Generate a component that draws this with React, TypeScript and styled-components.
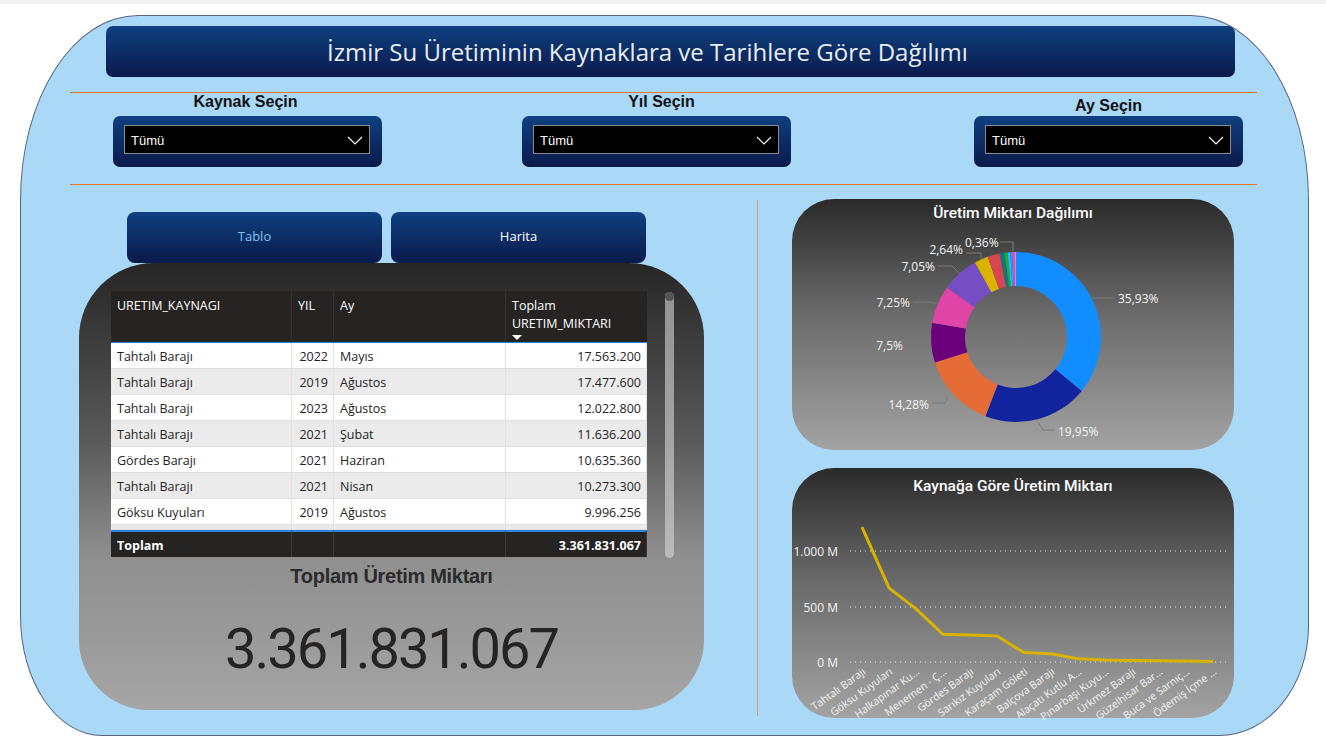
import React from "react";
import styled, { createGlobalStyle } from "styled-components";

const GlobalStyle = createGlobalStyle`
  html, body { margin: 0; padding: 0; background: #ffffff; }
  body { font-family: "Open Sans", "Liberation Sans", sans-serif; overflow: hidden; }
`;

const Page = styled.div`
  width: 1326px;
  height: 736px;
  box-sizing: border-box;
  overflow: hidden;
  background: #ffffff;
  border-top: 4px solid #f2f2f2;
  padding: 11px 0 0 20px;
`;

const Panel = styled.main`
  box-sizing: border-box;
  width: 1289px;
  height: 721px;
  background: #aad8f7;
  border: 1px solid #56667f;
  border-radius: 118px 118px 90px 82px / 185px 185px 110px 120px;
  display: flex;
  flex-direction: column;
`;

const TitleBar = styled.header`
  box-sizing: border-box;
  margin: 10px 0 0 85px;
  width: 1129px;
  height: 51px;
  padding-right: 46px;
  border-radius: 7px;
  background: linear-gradient(#0e4080, #0b1a4a);
  display: flex;
  align-items: center;
  justify-content: center;
  color: #e9eef5;
  font-family: "Open Sans", "Noto Sans", sans-serif;
  font-size: 24px;
`;

const Rule = styled.div<{ $mt: number }>`
  margin: ${(p) => p.$mt}px 0 0 49px;
  width: 1187px;
  height: 1px;
  background: #f07522;
`;

const FilterRow = styled.section`
  display: flex;
  height: 91px;
`;

const Slicer = styled.div<{ $ml: number }>`
  margin-left: ${(p) => p.$ml}px;
  width: 269px;
  display: flex;
  flex-direction: column;
`;

const SlicerLabel = styled.div<{ $pt: number; $dx: number }>`
  box-sizing: border-box;
  height: 23px;
  padding-top: ${(p) => p.$pt}px;
  line-height: 17px;
  text-align: center;
  transform: translateX(${(p) => p.$dx}px);
  font-family: "Liberation Sans", Arial, sans-serif;
  font-weight: bold;
  font-size: 16px;
  color: #111;
`;

const SlicerBox = styled.div`
  box-sizing: border-box;
  height: 51px;
  border-radius: 7px;
  background: linear-gradient(#0e4080, #0b1a4a);
  padding: 9px 12px 0 11px;
`;

const SelectField = styled.div`
  box-sizing: border-box;
  height: 29px;
  background: #000;
  border: 1px solid #8a8a8a;
  display: flex;
  align-items: center;
  justify-content: space-between;
  padding: 2px 6px 0 6px;
  color: #fff;
  font-family: "Liberation Sans", Arial, sans-serif;
  font-size: 13px;
`;

const ContentRow = styled.section`
  display: flex;
  align-items: flex-start;
`;

const LeftCol = styled.div`
  margin: 27px 0 0 58px;
  width: 625px;
  display: flex;
  flex-direction: column;
`;

const ButtonRow = styled.div`
  display: flex;
  gap: 9px;
  padding-left: 48px;
`;

const NavButton = styled.div<{ $active?: boolean }>`
  width: 255px;
  height: 51px;
  border-radius: 8px;
  background: linear-gradient(#0e4080, #0b1a4a);
  display: flex;
  align-items: center;
  justify-content: center;
  padding-bottom: 3px;
  box-sizing: border-box;
  font-family: "Open Sans", sans-serif;
  font-size: 13px;
  color: ${(p) => (p.$active ? "#7ec3f5" : "#ffffff")};
`;

const TableCard = styled.div`
  box-sizing: border-box;
  width: 625px;
  height: 447px;
  border-radius: 75px 75px 70px 70px;
  background: linear-gradient(#262626 0%, #5a5a5a 40%, #8e8e8e 65%, #a5a5a5 100%);
  padding: 28px 0 0 32px;
  display: flex;
  flex-direction: column;
`;

const TableRow = styled.div`
  display: flex;
  align-items: flex-start;
`;

const Table = styled.div`
  width: 536px;
  display: grid;
  grid-template-columns: 181px 42px 172px 141px;
  font-family: "Open Sans", sans-serif;
  font-size: 12.5px;
`;

const HeadCell = styled.div<{ $right?: boolean }>`
  box-sizing: border-box;
  height: 52px;
  background: #252423;
  color: #fff;
  padding: 6px 6px 0 6px;
  line-height: 18px;
  border-right: ${(p) => (p.$right ? "none" : "1px solid #33322f")};
  border-bottom: 1px solid #2f86d8;
`;

const SortArrow = styled.div`
  width: 0;
  height: 0;
  margin-top: 2px;
  border-left: 5px solid transparent;
  border-right: 5px solid transparent;
  border-top: 5px solid #fff;
`;

const Cell = styled.div<{ $shade: boolean; $align: string; $h: number }>`
  box-sizing: border-box;
  height: ${(p) => p.$h}px;
  background: ${(p) => (p.$shade ? "#ebebeb" : "#ffffff")};
  color: #252423;
  text-align: ${(p) => p.$align};
  padding: 1px 5px 0 6px;
  line-height: 25px;
  border-right: 1px solid #e2e2e2;
  border-bottom: 1px solid #dedede;
  overflow: hidden;
  white-space: nowrap;
`;

const TotalCell = styled.div<{ $align: string }>`
  box-sizing: border-box;
  height: 27px;
  background: #252423;
  color: #fff;
  font-weight: bold;
  text-align: ${(p) => p.$align};
  padding: 1px 5px 0 6px;
  line-height: 25px;
  border-top: 2px solid #2f86d8;
  border-right: 1px solid #3a3936;
`;

const ScrollTrack = styled.div`
  margin: 1px 0 0 18px;
  width: 9px;
  height: 266px;
  border-radius: 5px;
  background: rgba(215, 215, 215, 0.6);
  display: flex;
  flex-direction: column;
`;

const ScrollThumb = styled.div`
  width: 9px;
  height: 9px;
  border-radius: 50%;
  background: #555;
`;

const KpiTitle = styled.div`
  margin: 6px 0 0 -32px;
  line-height: 24px;
  text-align: center;
  font-family: "Liberation Sans", Arial, sans-serif;
  font-weight: bold;
  font-size: 20px;
  letter-spacing: -0.3px;
  color: #2b2b2b;
`;

const KpiValue = styled.div`
  margin: 31px 0 0 -32px;
  line-height: 60px;
  text-align: center;
  font-family: Roboto, "Open Sans", sans-serif;
  font-size: 56px;
  letter-spacing: -2px;
  color: #252423;
`;

const Divider = styled.div`
  margin: 15px 0 0 53px;
  width: 1px;
  height: 516px;
  background: #e3957a;
`;

const RightCol = styled.div`
  margin: 14px 0 0 34px;
  width: 442px;
  display: flex;
  flex-direction: column;
  gap: 18px;
`;

const ChartCard = styled.div<{ $h: number }>`
  width: 442px;
  height: ${(p) => p.$h}px;
  border-radius: 42px;
  background: linear-gradient(#2a2a2a, #6a6a6a 45%, #a3a3a3);
  display: flex;
  flex-direction: column;
`;

const ChartTitle = styled.div<{ $pt: number }>`
  padding-top: ${(p) => p.$pt}px;
  line-height: 18px;
  text-align: center;
  font-family: Roboto, "Open Sans", sans-serif;
  font-weight: 500;
  font-size: 15.5px;
  color: #ffffff;
`;

const Chevron = () => (
  <svg width="16" height="9" viewBox="0 0 16 9">
    <polyline points="1,1 8,8 15,1" fill="none" stroke="#fff" strokeWidth="1.2" />
  </svg>
);

const rows = [
  ["Tahtalı Barajı", "2022", "Mayıs", "17.563.200"],
  ["Tahtalı Barajı", "2019", "Ağustos", "17.477.600"],
  ["Tahtalı Barajı", "2023", "Ağustos", "12.022.800"],
  ["Tahtalı Barajı", "2021", "Şubat", "11.636.200"],
  ["Gördes Barajı", "2021", "Haziran", "10.635.360"],
  ["Tahtalı Barajı", "2021", "Nisan", "10.273.300"],
  ["Göksu Kuyuları", "2019", "Ağustos", "9.996.256"],
];
const aligns = ["left", "right", "left", "right"];

const segments: [number, string][] = [
  [35.93, "#118DFF"],
  [19.95, "#12239E"],
  [14.28, "#E66C37"],
  [7.5, "#6B007B"],
  [7.25, "#E044A7"],
  [7.05, "#744EC2"],
  [2.64, "#D9B300"],
  [2.3, "#D64550"],
  [0.9, "#197278"],
  [0.6, "#1AAB40"],
  [0.5, "#15C6F4"],
  [0.36, "#4092FF"],
  [0.4, "#BE5DC9"],
  [0.34, "#F472D0"],
];

const arcPath = (cx: number, cy: number, r0: number, r1: number, a0: number, a1: number) => {
  const p = (r: number, a: number) => [cx + r * Math.sin(a), cy - r * Math.cos(a)];
  const large = a1 - a0 > Math.PI ? 1 : 0;
  const [x0, y0] = p(r1, a0);
  const [x1, y1] = p(r1, a1);
  const [x2, y2] = p(r0, a1);
  const [x3, y3] = p(r0, a0);
  return `M${x0} ${y0} A${r1} ${r1} 0 ${large} 1 ${x1} ${y1} L${x2} ${y2} A${r0} ${r0} 0 ${large} 0 ${x3} ${y3} Z`;
};

const donutLabels: { t: string; x: number; y: number; anchor: "start" | "end"; line: string }[] = [
  { t: "35,93%", x: 326, y: 76, anchor: "start", line: "300,76 322,76" },
  { t: "19,95%", x: 266, y: 209, anchor: "start", line: "246,200 251,208 263,208" },
  { t: "14,28%", x: 137, y: 182, anchor: "end", line: "156,175 153,181 140,181" },
  { t: "7,5%", x: 111, y: 123, anchor: "end", line: "139,121 115,121" },
  { t: "7,25%", x: 118, y: 80, anchor: "end", line: "145,82 139,80 121,80" },
  { t: "7,05%", x: 143, y: 44, anchor: "end", line: "168,52 160,44 146,44" },
  { t: "2,64%", x: 171, y: 27, anchor: "end", line: "189,37 189,31 174,31" },
  { t: "0,36%", x: 173, y: 20, anchor: "start", line: "208,20 221,20 221,29" },
];

const Donut = () => {
  let acc = 0;
  const total = segments.reduce((s, [v]) => s + v, 0);
  return (
    <svg width="442" height="228" viewBox="0 0 442 228">
      {segments.map(([v, c], i) => {
        const a0 = (acc / total) * Math.PI * 2;
        acc += v;
        const a1 = (acc / total) * Math.PI * 2;
        return <path key={i} d={arcPath(224, 115, 51, 85, a0, a1)} fill={c} />;
      })}
      {donutLabels.map((l, i) => (
        <g key={i}>
          <polyline points={l.line} fill="none" stroke="#7a7a7a" strokeWidth="1" />
          <text
            x={l.x}
            y={l.y}
            textAnchor={l.anchor}
            dominantBaseline="central"
            fill="#f4f4f4"
            fontSize="12"
            fontFamily="'Open Sans', sans-serif"
          >
            {l.t}
          </text>
        </g>
      ))}
    </svg>
  );
};

const sources = [
  "Tahtalı Barajı",
  "Göksu Kuyuları",
  "Halkapınar Ku...",
  "Menemen - Ç...",
  "Gördes Barajı",
  "Sarıkız Kuyuları",
  "Karaçam Göleti",
  "Balçova Barajı",
  "Alaçatı Kutlu A...",
  "Pınarbaşı Kuyu...",
  "Ürkmez Barajı",
  "Güzelhisar Bar...",
  "Buca ve Sarnıç...",
  "Ödemiş İçme ...",
];
const values = [1220, 670, 480, 250, 245, 235, 85, 75, 30, 18, 14, 12, 8, 4];

const LineChart = () => {
  const xs = values.map((_, i) => 70 + 27 * i);
  const ys = values.map((v) => 167 - v * 0.1106);
  const pts = xs.map((x, i) => `${x},${ys[i]}`).join(" ");
  const grid = [
    { y: 56, t: "1.000 M" },
    { y: 112, t: "500 M" },
    { y: 167, t: "0 M" },
  ];
  return (
    <svg width="442" height="222" viewBox="0 0 442 222" overflow="visible">
      {grid.map((g) => (
        <g key={g.t}>
          <line x1="58" x2="434" y1={g.y} y2={g.y} stroke="#e6e6e6" strokeWidth="1" strokeDasharray="1 4" />
          <text
            x="46"
            y={g.y}
            textAnchor="end"
            dominantBaseline="central"
            fill="#f4f4f4"
            fontSize="12"
            fontFamily="'Open Sans', sans-serif"
          >
            {g.t}
          </text>
        </g>
      ))}
      <polyline points={pts} fill="none" stroke="#D9B300" strokeWidth="3" strokeLinejoin="round" />
      {sources.map((s, i) => (
        <text
          key={s}
          transform={`translate(${xs[i] + 2} 175) rotate(-36)`}
          textAnchor="end"
          dominantBaseline="central"
          fill="#f2f2f2"
          fontSize="10.5"
          fontFamily="'Open Sans', sans-serif"
        >
          {s}
        </text>
      ))}
    </svg>
  );
};

export default function App() {
  return (
    <>
      <GlobalStyle />
      <Page>
        <Panel>
          <TitleBar>İzmir Su Üretiminin Kaynaklara ve Tarihlere Göre Dağılımı</TitleBar>
          <Rule $mt={15} />
          <FilterRow>
            <Slicer $ml={92}>
              <SlicerLabel $pt={0} $dx={-2}>Kaynak Seçin</SlicerLabel>
              <SlicerBox>
                <SelectField>
                  <span>Tümü</span>
                  <Chevron />
                </SelectField>
              </SlicerBox>
            </Slicer>
            <Slicer $ml={140}>
              <SlicerLabel $pt={0} $dx={5}>Yıl Seçin</SlicerLabel>
              <SlicerBox>
                <SelectField>
                  <span>Tümü</span>
                  <Chevron />
                </SelectField>
              </SlicerBox>
            </Slicer>
            <Slicer $ml={183}>
              <SlicerLabel $pt={4} $dx={0}>Ay Seçin</SlicerLabel>
              <SlicerBox>
                <SelectField>
                  <span>Tümü</span>
                  <Chevron />
                </SelectField>
              </SlicerBox>
            </Slicer>
          </FilterRow>
          <Rule $mt={0} />
          <ContentRow>
            <LeftCol>
              <ButtonRow>
                <NavButton $active>Tablo</NavButton>
                <NavButton>Harita</NavButton>
              </ButtonRow>
              <TableCard>
                <TableRow>
                  <Table>
                    <HeadCell>URETIM_KAYNAGI</HeadCell>
                    <HeadCell>YIL</HeadCell>
                    <HeadCell>Ay</HeadCell>
                    <HeadCell $right>
                      Toplam
                      <br />
                      URETIM_MIKTARI
                      <SortArrow />
                    </HeadCell>
                    {rows.map((r, ri) =>
                      r.map((c, ci) => (
                        <Cell key={`${ri}-${ci}`} $shade={ri % 2 === 1} $align={aligns[ci]} $h={26}>
                          {c}
                        </Cell>
                      ))
                    )}
                    {aligns.map((a, ci) => (
                      <Cell key={`p-${ci}`} $shade $align={a} $h={5} />
                    ))}
                    <TotalCell $align="left">Toplam</TotalCell>
                    <TotalCell $align="left" />
                    <TotalCell $align="left" />
                    <TotalCell $align="right">3.361.831.067</TotalCell>
                  </Table>
                  <ScrollTrack>
                    <ScrollThumb />
                  </ScrollTrack>
                </TableRow>
                <KpiTitle>Toplam Üretim Miktarı</KpiTitle>
                <KpiValue>3.361.831.067</KpiValue>
              </TableCard>
            </LeftCol>
            <Divider />
            <RightCol>
              <ChartCard $h={251}>
                <ChartTitle $pt={5}>Üretim Miktarı Dağılımı</ChartTitle>
                <Donut />
              </ChartCard>
              <ChartCard $h={250}>
                <ChartTitle $pt={9}>Kaynağa Göre Üretim Miktarı</ChartTitle>
                <LineChart />
              </ChartCard>
            </RightCol>
          </ContentRow>
        </Panel>
      </Page>
    </>
  );
}
